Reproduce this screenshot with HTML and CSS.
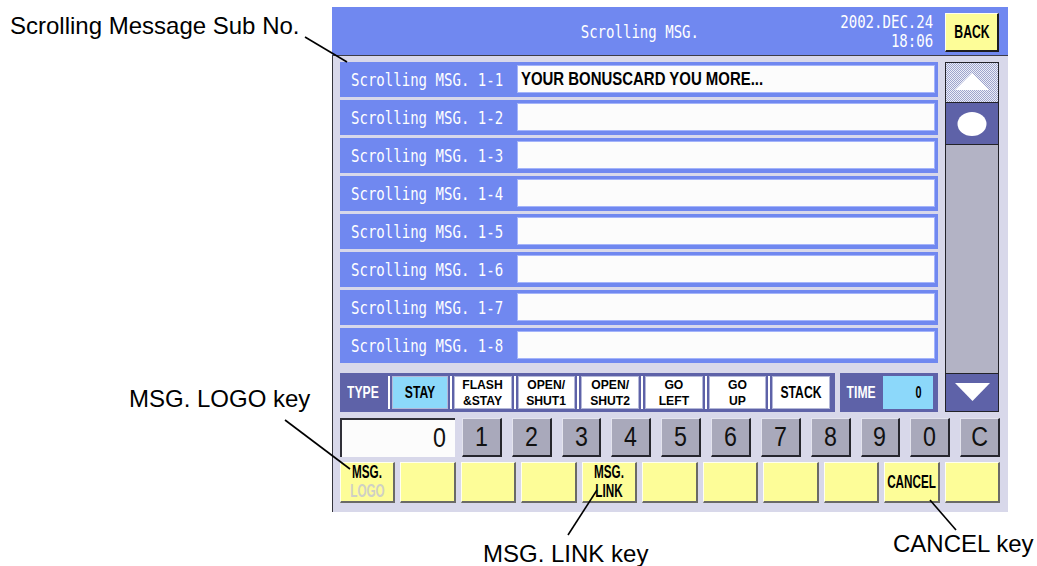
FILE: index.html
```html
<!DOCTYPE html>
<html>
<head>
    <title>Scrolling MSG.</title>
    <link rel="stylesheet" href="styles.css">
</head>
<body>
    <div id="sheet">
        <div id="panel">
            <div class="topbar mono">
                <div class="title"><span class="sq">Scrolling MSG.</span></div>
                <div class="clock"><span class="sq">2002.DEC.24</span><span class="sq">18:06</span></div>
                <div class="back bk"><span class="sq">BACK</span></div>
            </div>
            <div class="body">
                <div class="main">
                    <div class="rows">
                        <div class="row"><span class="label mono"><span class="sq">Scrolling MSG. 1-1</span></span><div class="field bk"><span class="sq">YOUR BONUSCARD YOU MORE...</span></div></div>
                        <div class="row"><span class="label mono"><span class="sq">Scrolling MSG. 1-2</span></span><div class="field"></div></div>
                        <div class="row"><span class="label mono"><span class="sq">Scrolling MSG. 1-3</span></span><div class="field"></div></div>
                        <div class="row"><span class="label mono"><span class="sq">Scrolling MSG. 1-4</span></span><div class="field"></div></div>
                        <div class="row"><span class="label mono"><span class="sq">Scrolling MSG. 1-5</span></span><div class="field"></div></div>
                        <div class="row"><span class="label mono"><span class="sq">Scrolling MSG. 1-6</span></span><div class="field"></div></div>
                        <div class="row"><span class="label mono"><span class="sq">Scrolling MSG. 1-7</span></span><div class="field"></div></div>
                        <div class="row"><span class="label mono"><span class="sq">Scrolling MSG. 1-8</span></span><div class="field"></div></div>
                    </div>
                    <div class="typebar bk">
                        <div class="typeset">
                            <span class="tag"><span class="sq">TYPE</span></span>
                            <div class="opt on"><span class="sq">STAY</span></div>
                            <div class="opt two"><span class="sq">FLASH<br>&amp;STAY</span></div>
                            <div class="opt two"><span class="sq">OPEN/<br>SHUT1</span></div>
                            <div class="opt two"><span class="sq">OPEN/<br>SHUT2</span></div>
                            <div class="opt two"><span class="sq">GO<br>LEFT</span></div>
                            <div class="opt two"><span class="sq">GO<br>UP</span></div>
                            <div class="opt"><span class="sq">STACK</span></div>
                        </div>
                        <div class="timeset">
                            <span class="tag"><span class="sq">TIME</span></span>
                            <span class="timeval"><span class="sq">0</span></span>
                        </div>
                    </div>
                    <div class="scroll">
                        <div class="sb-up">
                            <svg width="52" height="40" viewBox="0 0 52 40"><polygon points="26,10 43,27 9,27" fill="#fff"/></svg>
                        </div>
                        <div class="sb-knob">
                            <svg width="52" height="41" viewBox="0 0 52 41"><ellipse cx="26" cy="21" rx="14.5" ry="12" fill="#fff"/></svg>
                        </div>
                        <div class="sb-track"></div>
                        <div class="sb-down">
                            <svg width="52" height="37" viewBox="0 0 52 37"><polygon points="9,9 44,9 26.5,27" fill="#fff"/></svg>
                        </div>
                    </div>
                </div>
                <div class="numrow">
                    <div class="entry dig"><span class="sq">0</span></div>
                    <div class="digits dig">
                        <div class="num"><span class="sq">1</span></div>
                        <div class="num"><span class="sq">2</span></div>
                        <div class="num"><span class="sq">3</span></div>
                        <div class="num"><span class="sq">4</span></div>
                        <div class="num"><span class="sq">5</span></div>
                        <div class="num"><span class="sq">6</span></div>
                        <div class="num"><span class="sq">7</span></div>
                        <div class="num"><span class="sq">8</span></div>
                        <div class="num"><span class="sq">9</span></div>
                        <div class="num"><span class="sq">0</span></div>
                        <div class="num"><span class="sq">C</span></div>
                    </div>
                </div>
                <div class="keyrow bk">
                    <div class="fkey"><span class="sq">MSG.</span><span class="sq dim">LOGO</span></div>
                    <div class="fkey"></div>
                    <div class="fkey"></div>
                    <div class="fkey"></div>
                    <div class="fkey"><span class="sq">MSG.</span><span class="sq">LINK</span></div>
                    <div class="fkey"></div>
                    <div class="fkey"></div>
                    <div class="fkey"></div>
                    <div class="fkey"></div>
                    <div class="fkey"><span class="sq">CANCEL</span></div>
                    <div class="fkey"></div>
                </div>
            </div>
        </div>

        <!-- callouts -->
        <div class="note n-sub">Scrolling Message Sub No.</div>
        <div class="note n-logo">MSG. LOGO key</div>
        <div class="note n-link">MSG. LINK key</div>
        <div class="note n-cancel">CANCEL key</div>
        <svg class="leaders" width="1037" height="566" viewBox="0 0 1037 566">
            <line x1="305" y1="37" x2="347" y2="62"/>
            <line x1="285" y1="420" x2="350" y2="469"/>
            <line x1="568" y1="535" x2="597" y2="490"/>
            <line x1="930" y1="500" x2="956" y2="530"/>
        </svg>
    </div>
</body>
</html>
```

FILE: styles.css
```css
* {
    box-sizing: border-box;
}
body {
    margin: 0;
    background: #fff;
    font-family: "Liberation Sans", Arial, sans-serif;
}
#sheet {
    position: relative;
    width: 1037px;
    height: 566px;
    overflow: hidden;
    padding: 7px 0 0 332px;
}
#panel {
    width: 676px;
}

/* squeezed text, the terminal font is tall and narrow */
.sq {
    display: inline-block;
    white-space: nowrap;
    transform: scaleX(var(--sx, .7));
}
.mono {
    font-family: "DejaVu Sans Mono", monospace;
    font-size: 18px;
    color: #fff;
    --sx: .78;
}
.bk {
    font-family: "Liberation Sans", Arial, sans-serif;
    font-weight: bold;
    font-size: 18px;
    color: #000;
    --sx: .68;
}
.dig {
    font-family: "Liberation Sans", Arial, sans-serif;
    font-size: 27px;
    color: #111;
    --sx: .86;
}

/* header */
.topbar {
    display: flex;
    align-items: center;
    height: 49px;
    padding: 6px 9px 3px 0;
    background: #7088f0;
    border-bottom: 1px solid #3c3c48;
}
.title {
    flex: 1;
    padding-left: 134px;
    text-align: center;
    margin-bottom: 3px;
}
.clock {
    display: flex;
    flex-direction: column;
    align-items: flex-end;
    line-height: 19px;
    margin: 0 12px 3px 0;
}
.clock .sq {
    transform-origin: right center;
}
.back {
    width: 54px;
    height: 39px;
    display: flex;
    align-items: center;
    justify-content: center;
    background: #fdfd98;
    border-style: solid;
    border-width: 1px 2px 2px 1px;
    border-color: #fffff0 #1c1c20 #1c1c20 #fffff0;
}

/* body */
.body {
    background: #d8d8ea;
    border-left: 1px solid #34343c;
    padding: 6px 8px 10px 7px;
}
.main {
    display: grid;
    grid-template-columns: 598px 54px;
    column-gap: 7px;
    row-gap: 10px;
}
.rows {
    display: flex;
    flex-direction: column;
    gap: 3px;
}
.row {
    display: flex;
    height: 35px;
    padding: 3px 3px 4px;
    background: #7088f0;
}
.label {
    width: 174px;
    flex-shrink: 0;
    padding-left: 8px;
    display: flex;
    align-items: center;
}
.label .sq {
    transform-origin: left center;
}
.field {
    flex: 1;
    display: flex;
    align-items: center;
    padding-left: 3px;
    background: #fcfcfc;
    border: 1px solid #a4b4fa;
}
.field .sq {
    --sx: .83;
    transform-origin: left center;
}

/* type selector */
.typebar {
    grid-column: 1;
    display: flex;
    gap: 5px;
    height: 39px;
}
.typeset {
    flex: 1;
    display: flex;
    gap: 6px;
    padding: 3px 5px 3px 0;
    background: #5e62a8;
}
.timeset {
    width: 98px;
    display: flex;
    padding: 3px 5px 3px 0;
    background: #5e62a8;
}
.tag {
    width: 46px;
    flex-shrink: 0;
    display: flex;
    align-items: center;
    justify-content: center;
    color: #fff;
    font-size: 16px;
    --sx: .76;
}
.timeset .tag {
    width: 43px;
}
.opt {
    flex: 1;
    min-width: 0;
    display: flex;
    align-items: center;
    justify-content: center;
    text-align: center;
    font-size: 16px;
    background: #fff;
    border: 1px solid #b4b8d8;
    box-shadow: -2px 0 0 #5e62a8, -4px 0 0 #fff;
    --sx: .76;
}
.opt.two {
    font-size: 13.5px;
    line-height: 15.5px;
    --sx: .9;
}
.opt.on {
    flex: 0 0 56px;
    background: #8cd8fa;
}
.timeval {
    flex: 1;
    display: flex;
    align-items: center;
    justify-content: flex-end;
    padding-right: 10px;
    font-size: 16px;
    background: #8cd8fa;
}

/* scrollbar */
.scroll {
    grid-column: 2;
    grid-row: 1 / 3;
    display: flex;
    flex-direction: column;
    border: 1px solid #222228;
}
.scroll svg {
    display: block;
}
.sb-up {
    height: 40px;
    border-bottom: 1px solid #222228;
    background: repeating-conic-gradient(#9ea4cc 0 25%, #eceef8 0 50%) 0 0 / 2px 2px;
}
.sb-knob {
    height: 42px;
    border-bottom: 1px solid #222228;
    background: #5e62a8;
}
.sb-track {
    flex: 1;
    background: #b3b3c5;
}
.sb-down {
    height: 38px;
    border-top: 1px solid #222228;
    background: #5e62a8;
}

/* number entry */
.numrow {
    display: flex;
    height: 39px;
    margin-top: 6px;
}
.entry {
    width: 115px;
    display: flex;
    align-items: center;
    justify-content: flex-end;
    padding-right: 8px;
    background: #fcfcfc;
    border-top: 2px solid #303038;
    border-left: 2px solid #303038;
}
.digits {
    flex: 1;
    margin-left: 7px;
    display: grid;
    grid-template-columns: repeat(11, minmax(0, 1fr));
    column-gap: 10px;
}
.num {
    display: flex;
    align-items: center;
    justify-content: center;
    background: #a9a9bb;
    border-style: solid;
    border-width: 1px 2px 2px 1px;
    border-color: #e4e4ee #26262e #26262e #e4e4ee;
}

/* function keys */
.keyrow {
    display: grid;
    grid-template-columns: repeat(11, minmax(0, 1fr));
    column-gap: 5px;
    height: 40px;
    margin-top: 5px;
}
.fkey {
    display: flex;
    flex-direction: column;
    align-items: center;
    justify-content: center;
    line-height: 19px;
    background: #fdfd98;
    border-style: solid;
    border-width: 1px 2px 2px 1px;
    border-color: #fffff0 #6a6a66 #6a6a66 #fffff0;
}
.fkey .sq {
    --sx: .65;
}
.dim {
    color: #cfd0c6;
}

/* callouts */
.note {
    position: absolute;
    font-size: 24px;
    line-height: 24px;
    white-space: nowrap;
    color: #000;
}
.n-sub {
    left: 10px;
    top: 14px;
}
.n-logo {
    left: 129px;
    top: 387px;
}
.n-link {
    left: 483px;
    top: 542px;
}
.n-cancel {
    left: 893px;
    top: 532px;
}
.leaders {
    position: absolute;
    left: 0;
    top: 0;
    pointer-events: none;
}
.leaders line {
    stroke: #000;
    stroke-width: 1.6;
}
```
